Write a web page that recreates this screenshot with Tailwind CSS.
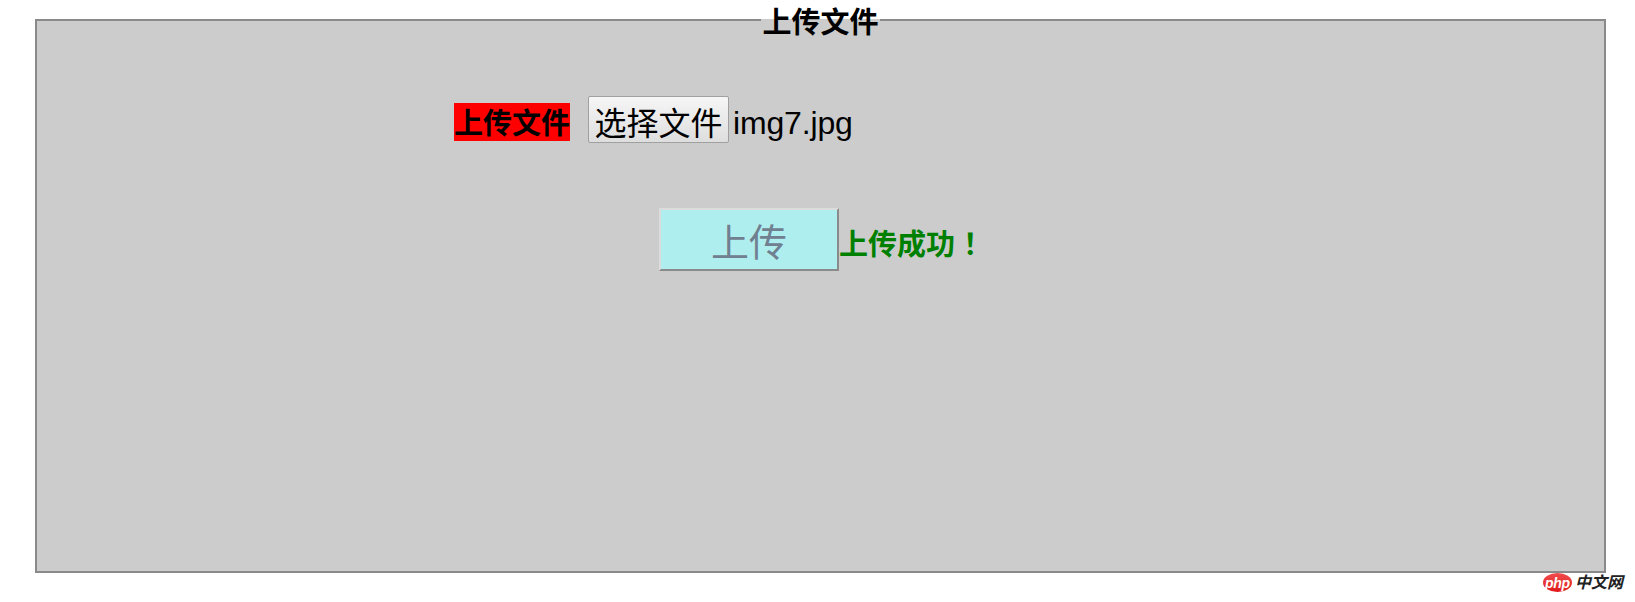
<!DOCTYPE html>
<html lang="zh-CN">
<head>
  <meta charset="UTF-8" />
  <title>上传文件</title>
  <script src="https://cdn.jsdelivr.net/npm/@tailwindcss/browser@4"></script>
</head>
<body class="relative h-[602px] overflow-hidden bg-white font-['Liberation_Sans','Noto_Sans_CJK_SC',sans-serif] text-black">

  <!-- upload form -->
  <div class="pl-[35px] pr-[29px]">
    <fieldset class="h-[573px] border-2 border-[#8a8a8a] bg-[#cccccc] px-0 pb-0">
      <legend class="mx-auto px-px pt-[7px] text-[29px] leading-[32px] font-bold">上传文件</legend>

      <div class="mt-[57px] flex items-start pl-[417px]">
        <label class="mt-[7px] h-[38px] w-[116px] bg-[#ff0000] text-center text-[29px] leading-[42px] font-bold whitespace-nowrap">上传文件</label>
        <button class="ml-[18px] h-[47px] w-[141px] rounded-[2px] border border-[#a0a0a0] bg-gradient-to-b from-[#f6f6f6] to-[#dedede] pt-[7px] text-[32px] leading-[40px]">选择文件</button>
        <span class="ml-[4px] mt-[7px] text-[32px] leading-[40px] tracking-[-0.15px]">img7.jpg</span>
      </div>

      <div class="mt-[65px] flex items-center pl-[622px]">
        <button class="h-[63px] w-[180px] border-2 border-t-[#dcdcdc] border-l-[#dcdcdc] border-r-[#8a8a8a] border-b-[#8a8a8a] bg-[#afeeee] pt-[7px] text-[38px] leading-[40px] text-[#708090]">上传</button>
        <span class="mt-[10px] text-[29px] leading-[36px] font-bold text-[#008000]">上传成功<span class="ml-[8px]">！</span></span>
      </div>
    </fieldset>
  </div>

  <!-- site watermark -->
  <div class="absolute left-[1543px] top-[573px] flex items-center gap-[3px]">
    <span class="flex h-[19px] w-[29px] items-center justify-center rounded-[50%] bg-gradient-to-b from-[#f04a4c] to-[#e01418] font-['Liberation_Sans',sans-serif] text-[14px] leading-[18px] font-bold tracking-[-0.3px] italic text-white">php</span>
    <span class="text-[16px] leading-[19px] font-bold italic text-[#222222]">中文网</span>
  </div>

</body>
</html>
